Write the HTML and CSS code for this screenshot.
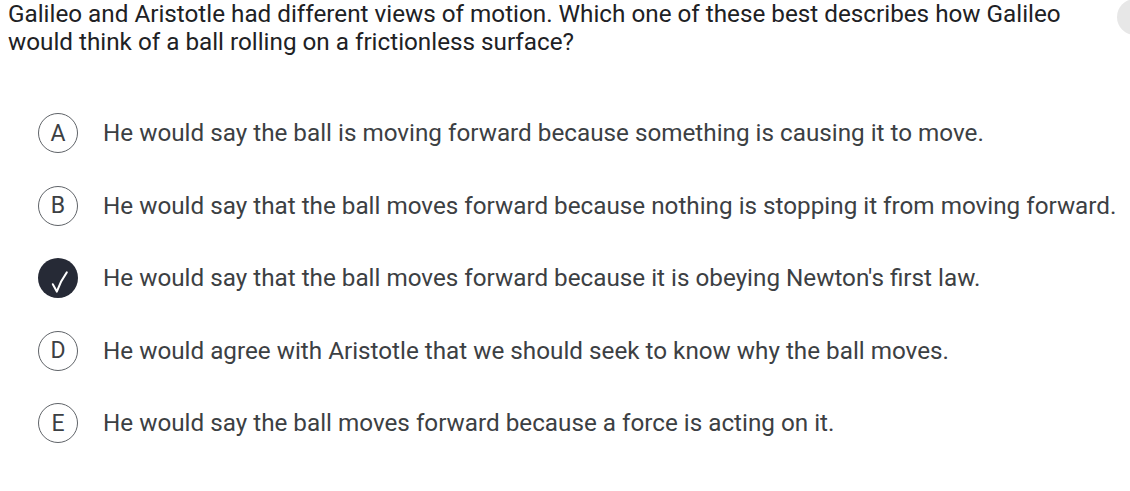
FILE: index.html
```html
<!DOCTYPE html>
<html>
<head>
<meta charset="utf-8">
<link rel="stylesheet" href="styles.css">
</head>
<body>
<div class="page">
  <div class="corner"></div>
  <p class="question">Galileo and Aristotle had different views of motion. Which one of these best describes how Galileo would think of a ball rolling on a frictionless surface?</p>
  <ul class="options">
    <li class="option"><span class="badge">A</span><span class="text">He would say the ball is moving forward because something is causing it to move.</span></li>
    <li class="option"><span class="badge">B</span><span class="text">He would say that the ball moves forward because nothing is stopping it from moving forward.</span></li>
    <li class="option"><span class="badge checked"><svg width="40" height="40" viewBox="0 0 40 40"><path d="M14.8 26.2 L18.8 33.6 Q22.5 23 28.8 14.4" fill="none" stroke="#fff" stroke-width="2" stroke-linecap="round" stroke-linejoin="round"/></svg></span><span class="text">He would say that the ball moves forward because it is obeying Newton's first law.</span></li>
    <li class="option"><span class="badge">D</span><span class="text">He would agree with Aristotle that we should seek to know why the ball moves.</span></li>
    <li class="option"><span class="badge">E</span><span class="text">He would say the ball moves forward because a force is acting on it.</span></li>
  </ul>
</div>
</body>
</html>
```
FILE: styles.css
```css
html, body {
  margin: 0;
  padding: 0;
  background: #fff;
}
body {
  font-family: Roboto, "Liberation Sans", sans-serif;
  overflow: hidden;
}
.page {
  position: relative;
  padding: 0 8px;
  width: 1130px;
  height: 491px;
  box-sizing: border-box;
  overflow: hidden;
}
.corner {
  position: absolute;
  left: 1117px;
  top: -1px;
  width: 36px;
  height: 36px;
  border-radius: 50%;
  background: #e7e7e7;
}
.question {
  margin: 0;
  font-size: 24.25px;
  line-height: 28px;
  color: #202124;
  max-width: 1090px;
}
.options {
  list-style: none;
  margin: 0;
  padding: 57px 0 0 30px;
  display: flex;
  flex-direction: column;
  gap: 32.5px;
}
.option {
  display: flex;
  align-items: center;
  gap: 25px;
  height: 40px;
}
.badge {
  flex: none;
  width: 40px;
  height: 40px;
  box-sizing: border-box;
  border: 1px solid #5f6368;
  border-radius: 50%;
  display: flex;
  align-items: center;
  justify-content: center;
  font-size: 23px;
  color: #3c4043;
}
.badge.checked {
  background: #262a36;
  border: none;
}
.text {
  font-size: 24.25px;
  color: #3c4043;
  white-space: nowrap;
}
```
